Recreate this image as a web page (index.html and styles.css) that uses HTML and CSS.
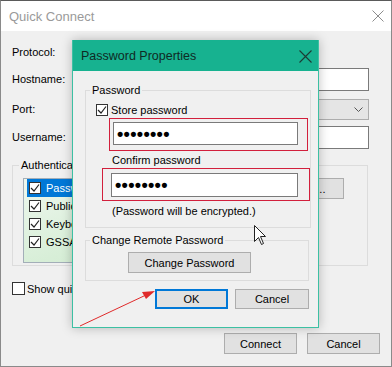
FILE: index.html
```html
<!DOCTYPE html>
<html lang="en">
<head>
    <meta charset="UTF-8">
    <meta name="viewport" content="width=device-width, initial-scale=1.0">
    <title>Quick Connect</title>
    <link rel="stylesheet" href="styles.css">
</head>
<body>
    <div class="qc">
        <div class="qc-title">
            <span class="qc-title-text">Quick Connect</span>
            <svg class="qc-close" width="12" height="12" viewBox="0 0 12 12">
                <path d="M0.5 0.5 L11.5 11.5 M11.5 0.5 L0.5 11.5" stroke="#8c8c8c" stroke-width="1" fill="none"/>
            </svg>
        </div>

        <div class="qc-body">
            <div class="qc-form">
                <label class="qc-label label-22">Protocol:</label>
                <div class="combo combo-short"></div>

                <label class="qc-label label-23">Hostname:</label>
                <div class="field"></div>

                <label class="qc-label label-21">Port:</label>
                <div class="combo">
                    <svg class="chevron" width="9" height="5" viewBox="0 0 9 5">
                        <path d="M0.5 0.5 L4.5 4.5 L8.5 0.5" stroke="#555" fill="none"/>
                    </svg>
                </div>

                <label class="qc-label label-23">Username:</label>
                <div class="field"></div>
            </div>

            <fieldset class="group auth-group">
                <legend>Authentication</legend>
                <div class="auth-row">
                    <ul class="methods">
                        <li class="method selected">
                            <span class="check">
                                <svg width="10" height="10" viewBox="0 0 10 10"><path d="M1 5 L4 8 L9 1.5" stroke="#222" stroke-width="1.2" fill="none"/></svg>
                            </span>
                            Password
                        </li>
                        <li class="method">
                            <span class="check">
                                <svg width="10" height="10" viewBox="0 0 10 10"><path d="M1 5 L4 8 L9 1.5" stroke="#222" stroke-width="1.2" fill="none"/></svg>
                            </span>
                            Public Key
                        </li>
                        <li class="method">
                            <span class="check">
                                <svg width="10" height="10" viewBox="0 0 10 10"><path d="M1 5 L4 8 L9 1.5" stroke="#222" stroke-width="1.2" fill="none"/></svg>
                            </span>
                            Keyboard Interactive
                        </li>
                        <li class="method">
                            <span class="check">
                                <svg width="10" height="10" viewBox="0 0 10 10"><path d="M1 5 L4 8 L9 1.5" stroke="#222" stroke-width="1.2" fill="none"/></svg>
                            </span>
                            GSSAPI
                        </li>
                    </ul>
                    <button class="btn setup-btn">Setup...</button>
                </div>
            </fieldset>

            <label class="startup">
                <span class="check plain"></span>
                Show quick connect on startup
            </label>

            <div class="qc-actions">
                <button class="btn action-btn">Connect</button>
                <button class="btn action-btn">Cancel</button>
            </div>
        </div>

        <!-- modal on top of the quick connect window -->
        <div class="pp">
            <div class="pp-title">
                <span>Password Properties</span>
                <svg class="pp-close" width="13" height="13" viewBox="0 0 13 13">
                    <path d="M0.5 0.5 L12.5 12.5 M12.5 0.5 L0.5 12.5" stroke="#1d3b34" stroke-width="1.1" fill="none"/>
                </svg>
            </div>
            <div class="pp-body">
                <fieldset class="group pw-group">
                    <legend>Password</legend>
                    <label class="store">
                        <span class="check">
                            <svg width="10" height="10" viewBox="0 0 10 10"><path d="M1 5 L4 8 L9 1.5" stroke="#222" stroke-width="1.2" fill="none"/></svg>
                        </span>
                        Store password
                    </label>
                    <div class="mark mark-one">
                        <div class="pw-field"><span class="dots">••••••••</span></div>
                    </div>
                    <div class="pw-label">Confirm password</div>
                    <div class="mark mark-two">
                        <div class="pw-field"><span class="dots">••••••••</span></div>
                    </div>
                    <div class="pw-note">(Password will be encrypted.)</div>
                </fieldset>

                <fieldset class="group remote-group">
                    <legend>Change Remote Password</legend>
                    <button class="btn change-btn">Change Password</button>
                </fieldset>

                <div class="pp-actions">
                    <button class="btn ok-btn">OK</button>
                    <button class="btn cancel-btn">Cancel</button>
                </div>
            </div>
        </div>

        <svg class="arrow" width="392" height="367" viewBox="0 0 392 367">
            <line x1="80" y1="326" x2="146" y2="295" stroke="#e02a2a" stroke-width="1"/>
            <polygon points="155,291 142,292 146,299" fill="#e02a2a"/>
        </svg>

        <svg class="cursor" width="13" height="21" viewBox="0 0 13 21">
            <path d="M0.5 0.5 L0.5 16.5 L4.5 12.5 L7.5 19.5 L9.5 18.5 L6.5 11.5 L11.5 11.5 Z" fill="#fff" stroke="#222" stroke-width="1"/>
        </svg>
    </div>
</body>
</html>
```

FILE: styles.css
```css
* {
    margin: 0;
    padding: 0;
    box-sizing: border-box;
}

body {
    font-family: "Liberation Sans", Arial, sans-serif;
    font-size: 11px;
    color: #000;
    background-color: #f0f0f0;
}

.qc {
    position: relative;
    width: 392px;
    height: 367px;
    background-color: #f0f0f0;
    border: 1px solid #8a8a8a;
    border-top-color: #5a5a5a;
    overflow: hidden;
}

.qc-title {
    height: 30px;
    background-color: white;
    display: flex;
    justify-content: space-between;
    align-items: center;
    padding: 0 7px 0 8px;
}

.qc-title-text {
    font-size: 13px;
    color: #9a9a9a;
}

.qc-body {
    padding: 10px 22px 0 11px;
    display: flex;
    flex-direction: column;
}

.qc-form {
    display: grid;
    grid-template-columns: 78px 1fr;
    grid-template-rows: 27px 31px 27px 23px;
    align-items: start;
}

.qc-label {
    white-space: nowrap;
}

.label-22 { line-height: 22px; }
.label-23 { line-height: 23px; }
.label-21 { line-height: 20px; }

.field {
    height: 23px;
    background-color: white;
    border: 1px solid #7a7a7a;
}

.combo {
    height: 21px;
    background-color: #e5e5e5;
    border: 1px solid #adadad;
    display: flex;
    justify-content: flex-end;
    align-items: center;
    padding-right: 5px;
}

.combo-short {
    height: 22px;
    width: 200px;
}

.group {
    border: 1px solid #dcdcdc;
    margin: 0;
    padding: 0;
}

.group legend {
    margin-left: 6px;
    padding: 0 2px;
    line-height: 14px;
}

.auth-group {
    margin-top: 9px;
    margin-right: 1px;
}

.auth-row {
    display: flex;
    justify-content: space-between;
    align-items: flex-start;
    padding: 6px 23px 2px 10px;
}

.methods {
    list-style: none;
    width: 180px;
    height: 85px;
    border: 1px solid #a3aeb8;
    background: linear-gradient(160deg, #eef7ee 0%, #d7eed7 60%, #cfe9cf 100%);
    padding: 0 0 0 3px;
}

.method {
    height: 18px;
    display: flex;
    align-items: center;
    gap: 5px;
    padding-left: 2px;
    white-space: nowrap;
}

.method.selected {
    background-color: #0078d7;
    color: white;
}

.check {
    width: 12px;
    height: 12px;
    flex: none;
    background-color: white;
    border: 1px solid #333;
    display: flex;
    align-items: center;
    justify-content: center;
}

.check.plain {
    width: 13px;
    height: 13px;
}

.btn {
    font-family: "Liberation Sans", Arial, sans-serif;
    font-size: 11px;
    color: #000;
    background-color: #e1e1e1;
    border: 1px solid #adadad;
}

.setup-btn {
    width: 75px;
    height: 21px;
}

.startup {
    margin-top: 16px;
    display: flex;
    align-items: center;
    gap: 2px;
    height: 13px;
}

.qc-actions {
    margin-top: 38px;
    margin-right: -11px;
    display: flex;
    justify-content: flex-end;
    gap: 10px;
}

.action-btn {
    width: 73px;
    height: 21px;
}

/* password properties dialog */

.pp {
    position: absolute;
    left: 71px;
    top: 39px;
    width: 247px;
    height: 288px;
    border: 1px solid #3cc0a3;
    border-top: none;
    background-color: #f0f0f0;
    box-shadow: 0 0 10px rgba(0, 0, 0, 0.25);
}

.pp-title {
    height: 31px;
    background-color: #17b290;
    color: #0f2a24;
    font-size: 12.5px;
    display: flex;
    justify-content: space-between;
    align-items: center;
    padding: 1px 6px 0 8px;
}

.pp-body {
    padding: 0 9px 0 12px;
    display: flex;
    flex-direction: column;
}

.pw-group {
    margin-top: 11px;
    padding-bottom: 7px;
}

.pw-group legend,
.remote-group legend {
    margin-left: 4px;
    line-height: 16px;
}

.store {
    margin-top: 5px;
    margin-left: 10px;
    display: flex;
    align-items: center;
    gap: 3px;
    height: 13px;
}

.mark {
    border: 1px solid #d21f3c;
}

.mark-one {
    margin-top: 2px;
    margin-left: 23px;
    width: 199px;
    height: 33px;
    padding: 3px 9px 5px 3px;
}

.mark-two {
    margin-top: -1px;
    margin-left: 16px;
    width: 208px;
    height: 33px;
    padding: 4px 11px 3px 8px;
}

.pw-field {
    height: 100%;
    background-color: white;
    border: 1px solid #7a7a7a;
    display: flex;
    align-items: center;
    padding-left: 3px;
}

.dots {
    font-size: 18px;
    font-weight: bold;
    line-height: 1;
    letter-spacing: 0.3px;
}

.pw-label {
    margin-top: 1px;
    margin-left: 26px;
    line-height: 17px;
}

.pw-note {
    margin-top: 1px;
    margin-left: 26px;
    line-height: 18px;
}

.remote-group {
    margin-top: 4px;
    padding-bottom: 7px;
}

.change-btn {
    margin-top: 4px;
    margin-left: 42px;
    width: 123px;
    height: 21px;
}

.pp-actions {
    margin-top: 8px;
    display: flex;
    justify-content: flex-end;
    gap: 7px;
}

.ok-btn {
    width: 73px;
    height: 20px;
    border-color: #0078d7;
    box-shadow: inset 0 0 0 1px #0078d7;
}

.cancel-btn {
    width: 74px;
    height: 20px;
}

/* annotations drawn over the screenshot */

.arrow {
    position: absolute;
    left: -1px;
    top: -1px;
    pointer-events: none;
}

.cursor {
    position: absolute;
    left: 253px;
    top: 224px;
    pointer-events: none;
}
```
